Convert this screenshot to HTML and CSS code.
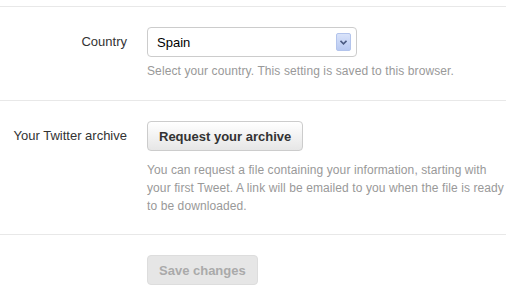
FILE: index.html
```html
<!DOCTYPE html>
<html>
<head>
<meta charset="utf-8">
<link rel="stylesheet" href="styles.css">
</head>
<body>
<div class="settings">
  <div class="row row-country">
    <div class="label">Country</div>
    <div class="controls">
      <div class="select">
        <span class="select-value">Spain</span>
        <span class="select-arrow">
          <svg width="7" height="5" viewBox="0 0 7 5"><path d="M0.5 0.8 L3.5 3.8 L6.5 0.8" fill="none" stroke="#4b5b82" stroke-width="1.6"/></svg>
        </span>
      </div>
      <p class="help help-tight">Select your country. This setting is saved to this browser.</p>
    </div>
  </div>
  <div class="row row-archive">
    <div class="label">Your Twitter archive</div>
    <div class="controls">
      <button class="btn">Request your archive</button>
      <p class="help">You can request a file containing your information, starting with your first Tweet. A link will be emailed to you when the file is ready to be downloaded.</p>
    </div>
  </div>
  <div class="row row-actions">
    <div class="label"></div>
    <div class="controls">
      <button class="btn btn-disabled" disabled>Save changes</button>
    </div>
  </div>
</div>
</body>
</html>
```
FILE: styles.css
```css
html, body {
  margin: 0;
  padding: 0;
  background: #fff;
}
body {
  font-family: "Liberation Sans", Arial, sans-serif;
  font-size: 13px;
  color: #333;
}
.settings {
  padding-top: 6px;
}
.row {
  display: grid;
  grid-template-columns: 127px 1fr;
  column-gap: 20px;
  border-top: 1px solid #e8e8e8;
  padding: 20px 0 20px;
}
.row-archive {
  padding-bottom: 19px;
}
.row-actions {
  padding-bottom: 10px;
}
.label {
  text-align: right;
  line-height: 30px;
  color: #333;
}
.controls {
  min-width: 0;
}
.select {
  position: relative;
  box-sizing: border-box;
  width: 210px;
  height: 30px;
  border: 1px solid #ccc;
  border-radius: 4px;
  display: flex;
  align-items: center;
  padding-left: 9px;
  color: #000;
  background: #fff;
}
.select-value {
  font-size: 13px;
}
.select-arrow {
  position: absolute;
  right: 5px;
  top: 5px;
  box-sizing: border-box;
  width: 15px;
  height: 18px;
  border: 1px solid #b3c4ec;
  border-radius: 2px;
  background: linear-gradient(#d9e3fa, #b8c9f1);
  display: flex;
  align-items: center;
  justify-content: center;
}
.select-arrow svg {
  display: block;
}
.help {
  margin: 10px 0 0;
  font-size: 12px;
  line-height: 18px;
  letter-spacing: 0.1px;
  color: #999;
}
.help-tight {
  margin-top: 5px;
}
.btn {
  display: block;
  box-sizing: border-box;
  height: 30px;
  padding: 0 11px;
  font-family: "Liberation Sans", Arial, sans-serif;
  font-size: 13px;
  font-weight: bold;
  color: #333;
  border: 1px solid #ccc;
  border-radius: 4px;
  background: linear-gradient(#fff, #e6e6e6);
}
.btn-disabled {
  color: #aaa;
  background: #e6e6e6;
  border-color: #ddd;
}
```
